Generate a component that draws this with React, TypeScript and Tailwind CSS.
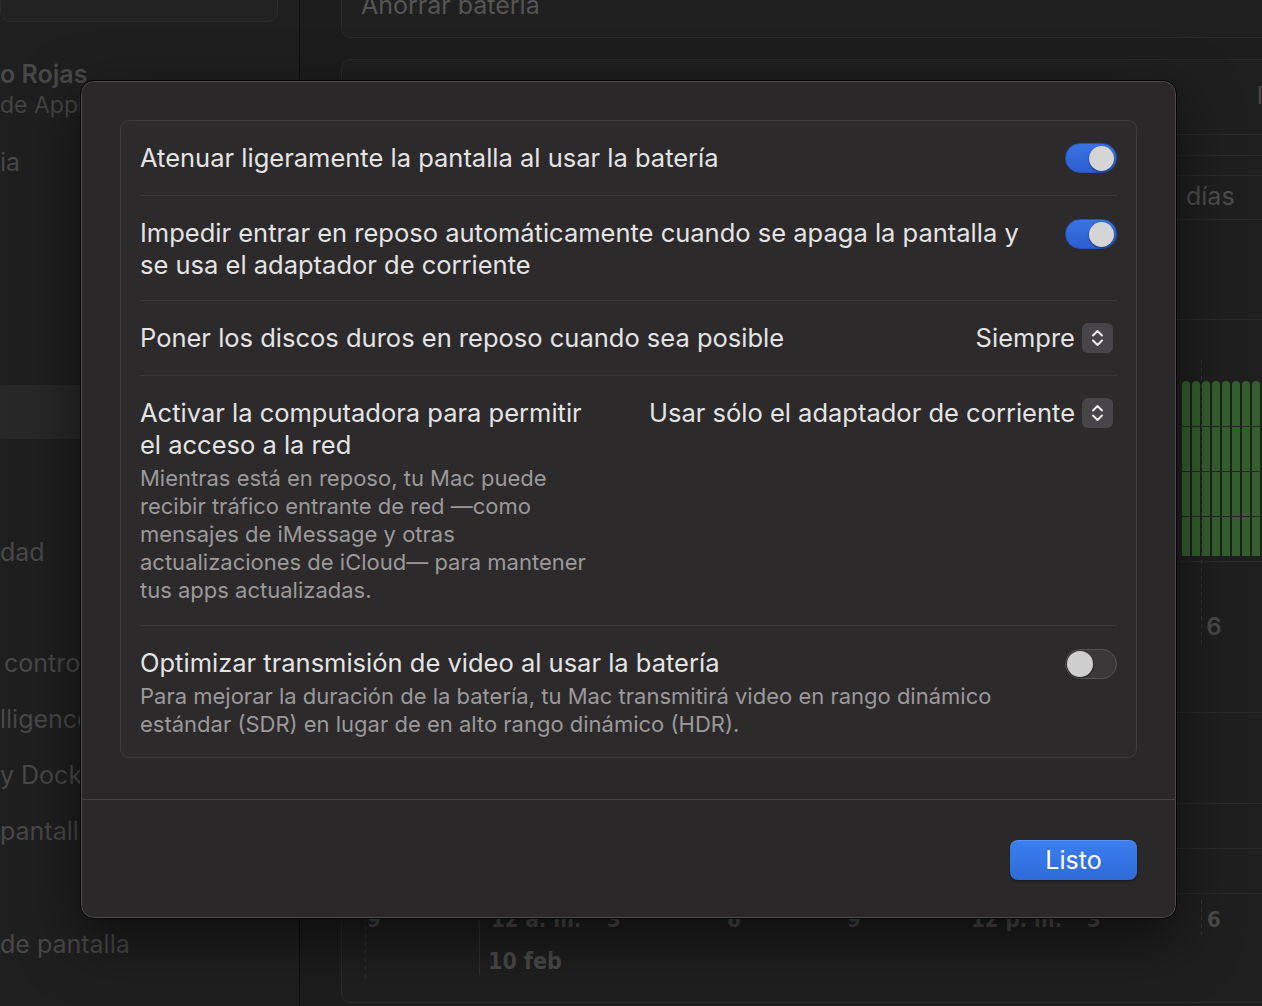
import React from "react";

function Toggle({ on }: { on: boolean }) {
  if (on) {
    return (
      <div className="flex h-[30px] w-[52px] shrink-0 items-center justify-end rounded-full border border-[#2853b3] bg-gradient-to-b from-[#3b73e4] to-[#2c5ecf] px-[2px]">
        <div className="h-[25px] w-[25px] rounded-full bg-[#d5d5d5] shadow-[0_1px_2px_rgba(0,0,0,0.45)]" />
      </div>
    );
  }
  return (
    <div className="flex h-[30px] w-[52px] shrink-0 items-center justify-start rounded-full border border-[#535153] bg-[#3a3839] px-[1px]">
      <div className="h-[26px] w-[26px] rounded-full bg-[#cfcfcf] shadow-[0_1px_2px_rgba(0,0,0,0.45)]" />
    </div>
  );
}

function Popup({ label }: { label: string }) {
  return (
    <div className="flex shrink-0 items-center gap-[7px] pr-[4px]">
      <span className="whitespace-nowrap">{label}</span>
      <div className="flex h-[30px] w-[31px] items-center justify-center rounded-[6px] bg-[#474547]">
        <svg width="31" height="30" viewBox="0 0 31 30" fill="none">
          <path d="M11 12.5 L15.5 8 L20 12.5" stroke="#ececec" strokeWidth="2" strokeLinecap="round" strokeLinejoin="round" />
          <path d="M11 17.5 L15.5 22 L20 17.5" stroke="#ececec" strokeWidth="2" strokeLinecap="round" strokeLinejoin="round" />
        </svg>
      </div>
    </div>
  );
}

function ChartBackdrop() {
  const bars = Array.from({ length: 9 }, (_, i) => 840 + i * 10);
  const ticks = [
    { x: 32, label: "9" },
    { x: 149, label: "12 a. m." },
    { x: 272, label: "3" },
    { x: 392, label: "6" },
    { x: 512, label: "9" },
    { x: 629, label: "12 p. m." },
    { x: 752, label: "3" },
    { x: 872, label: "6" },
  ];
  return (
    <svg width="960" height="944" viewBox="0 0 960 944" className="block">
      <g stroke="#2a2a2a" strokeWidth="1">
        <line x1="0" y1="74.5" x2="960" y2="74.5" />
        <line x1="0" y1="95.5" x2="960" y2="95.5" />
        <line x1="0" y1="115.5" x2="960" y2="115.5" />
        <line x1="0" y1="159.5" x2="960" y2="159.5" />
        <line x1="0" y1="259.5" x2="960" y2="259.5" />
        <line x1="0" y1="652.5" x2="960" y2="652.5" />
        <line x1="0" y1="743.5" x2="960" y2="743.5" />
        <line x1="0" y1="788.5" x2="960" y2="788.5" />
        <line x1="0" y1="833.5" x2="960" y2="833.5" />
      </g>
      <text x="915" y="44" fill="#4a4a4a" fontSize="24" fontFamily="Inter, sans-serif">l</text>
      <text x="844" y="145" fill="#4d4d4d" fontSize="25" fontFamily="Inter, sans-serif">días</text>
      {bars.map((x) => (
        <rect key={x} x={x} y={321} width={8} height={180} rx={4} fill="#34602e" />
      ))}
      <rect x="836" y="496" width="130" height="6" fill="#1f1f1f" />
      <g stroke="#262626" strokeWidth="1">
        <line x1="836" y1="366.5" x2="960" y2="366.5" />
        <line x1="836" y1="411.5" x2="960" y2="411.5" />
        <line x1="836" y1="456.5" x2="960" y2="456.5" />
      </g>
      <line x1="836" y1="501.5" x2="960" y2="501.5" stroke="#2c2c2c" />
      <line x1="859.5" y1="300" x2="859.5" y2="585" stroke="#333" strokeDasharray="4 4" />
      <line x1="859.5" y1="840" x2="859.5" y2="875" stroke="#333" strokeDasharray="4 4" />
      <line x1="23.5" y1="850" x2="23.5" y2="920" stroke="#2f2f2f" strokeDasharray="4 4" />
      <line x1="137.5" y1="850" x2="137.5" y2="915" stroke="#2f2f2f" />
      <text x="872" y="575" fill="#4a4a4a" fontSize="24" fontWeight="600" textAnchor="middle" fontFamily="Inter, sans-serif">6</text>
      {ticks.map((t) => (
        <text key={t.x + t.label} x={t.x} y={867} fill="#4a4a4a" fontSize="22" fontWeight="600" fontFamily="'DejaVu Sans Condensed', 'DejaVu Sans', sans-serif" textAnchor={t.label.length > 1 ? "start" : "middle"}>
          {t.label}
        </text>
      ))}
      <text x="146" y="909" fill="#4a4a4a" fontSize="23" fontWeight="600" fontFamily="'DejaVu Sans Condensed', 'DejaVu Sans', sans-serif">10 feb</text>
    </svg>
  );
}

export default function App() {
  return (
    <div className="relative flex h-[1006px] w-[1262px] overflow-hidden bg-[#1d1d1d] font-['Inter',sans-serif]">
      {/* sidebar */}
      <aside className="flex w-[300px] shrink-0 flex-col overflow-hidden border-r border-[#0f0f0f] bg-[#1f1f1f] text-[25px] leading-[32px] text-[#484848]">
        <div className="mr-[21px] mt-[-20px] h-[42px] rounded-b-[10px] border border-[#2c2c2c] bg-[#222]" />
        <div className="mt-[36px] whitespace-nowrap font-semibold">o Rojas</div>
        <div className="whitespace-nowrap text-[23px] leading-[30px] text-[#444]">de Apple</div>
        <div className="mt-[26px] whitespace-nowrap">ia</div>
        <div className="mt-[207px] h-[54px] bg-[#282828]" />
        <div className="mt-[97px] whitespace-nowrap">dad</div>
        <div className="mt-[79px] whitespace-nowrap pl-[4px]">control</div>
        <div className="mt-[24px] whitespace-nowrap">lligence</div>
        <div className="mt-[24px] whitespace-nowrap">y Dock</div>
        <div className="mt-[24px] whitespace-nowrap">pantalla</div>
        <div className="mt-[81px] whitespace-nowrap">de pantalla</div>
      </aside>

      {/* main content */}
      <main className="flex min-w-0 flex-1 flex-col overflow-hidden pl-[41px]">
        <div className="mt-[-22px] flex h-[60px] w-[1000px] shrink-0 items-start rounded-[10px] border border-[#2b2b2b] bg-[#202020] px-[19px] pt-[10px]">
          <span className="text-[25px] leading-[32px] text-[#555]">Ahorrar batería</span>
        </div>
        <div className="mt-[21px] h-[944px] w-[1000px] shrink-0 overflow-hidden rounded-[10px] border border-[#2a2a2a] bg-[#1f1f1f]">
          <ChartBackdrop />
        </div>
      </main>

      {/* sheet */}
      <div className="absolute left-[80px] top-[80px] flex h-[839px] w-[1097px] flex-col rounded-[14px] border border-[#050505] bg-[#2a2829] shadow-[inset_0_0_0_1px_rgba(255,255,255,0.17),0_20px_60px_rgba(0,0,0,0.55)]">
        <div className="px-[39px] pt-[39px]">
          <div className="rounded-[9px] border border-[#3e3c3d] bg-[#2c2a2b] px-[19px] text-[25.5px] leading-[32px] text-[#e4e4e4]">
            <div className="flex items-start justify-between gap-6 py-[21px]">
              <span className="whitespace-nowrap">Atenuar ligeramente la pantalla al usar la batería</span>
              <div className="mt-[1px]"><Toggle on /></div>
            </div>
            <div className="flex items-start justify-between gap-6 border-t border-[#3b393a] pb-[19px] pt-[21px]">
              <span className="whitespace-nowrap">
                Impedir entrar en reposo automáticamente cuando se apaga la pantalla y
                <br />
                se usa el adaptador de corriente
              </span>
              <div className="mt-[2px]"><Toggle on /></div>
            </div>
            <div className="flex items-center justify-between gap-6 border-t border-[#3b393a] py-[21px]">
              <span className="whitespace-nowrap">Poner los discos duros en reposo cuando sea posible</span>
              <Popup label="Siempre" />
            </div>
            <div className="flex items-start justify-between gap-6 border-t border-[#3b393a] pb-[21px] pt-[21px]">
              <div className="whitespace-nowrap">
                <div>
                  Activar la computadora para permitir
                  <br />
                  el acceso a la red
                </div>
                <div className="mt-[3px] text-[22px] leading-[28px] text-[#9b999a]">
                  Mientras está en reposo, tu Mac puede
                  <br />
                  recibir tráfico entrante de red —como
                  <br />
                  mensajes de iMessage y otras
                  <br />
                  actualizaciones de iCloud— para mantener
                  <br />
                  tus apps actualizadas.
                </div>
              </div>
              <Popup label="Usar sólo el adaptador de corriente" />
            </div>
            <div className="flex items-start justify-between gap-6 border-t border-[#3b393a] pb-[19px] pt-[21px]">
              <div className="whitespace-nowrap">
                <div>Optimizar transmisión de video al usar la batería</div>
                <div className="mt-[3px] text-[22px] leading-[28px] text-[#9b999a]">
                  Para mejorar la duración de la batería, tu Mac transmitirá video en rango dinámico
                  <br />
                  estándar (SDR) en lugar de en alto rango dinámico (HDR).
                </div>
              </div>
              <div className="mt-[2px]"><Toggle on={false} /></div>
            </div>
          </div>
        </div>
        <div className="mt-auto border-t border-[#434143] px-[39px] pb-[38px] pt-[40px]">
          <div className="flex justify-end">
            <button className="h-[40px] w-[127px] rounded-[8px] bg-gradient-to-b from-[#3c7ff0] to-[#2f6bd8] text-[25px] leading-[32px] text-white shadow-[0_1px_2px_rgba(0,0,0,0.4),inset_0_1px_0_rgba(255,255,255,0.15)]">
              Listo
            </button>
          </div>
        </div>
      </div>
    </div>
  );
}
